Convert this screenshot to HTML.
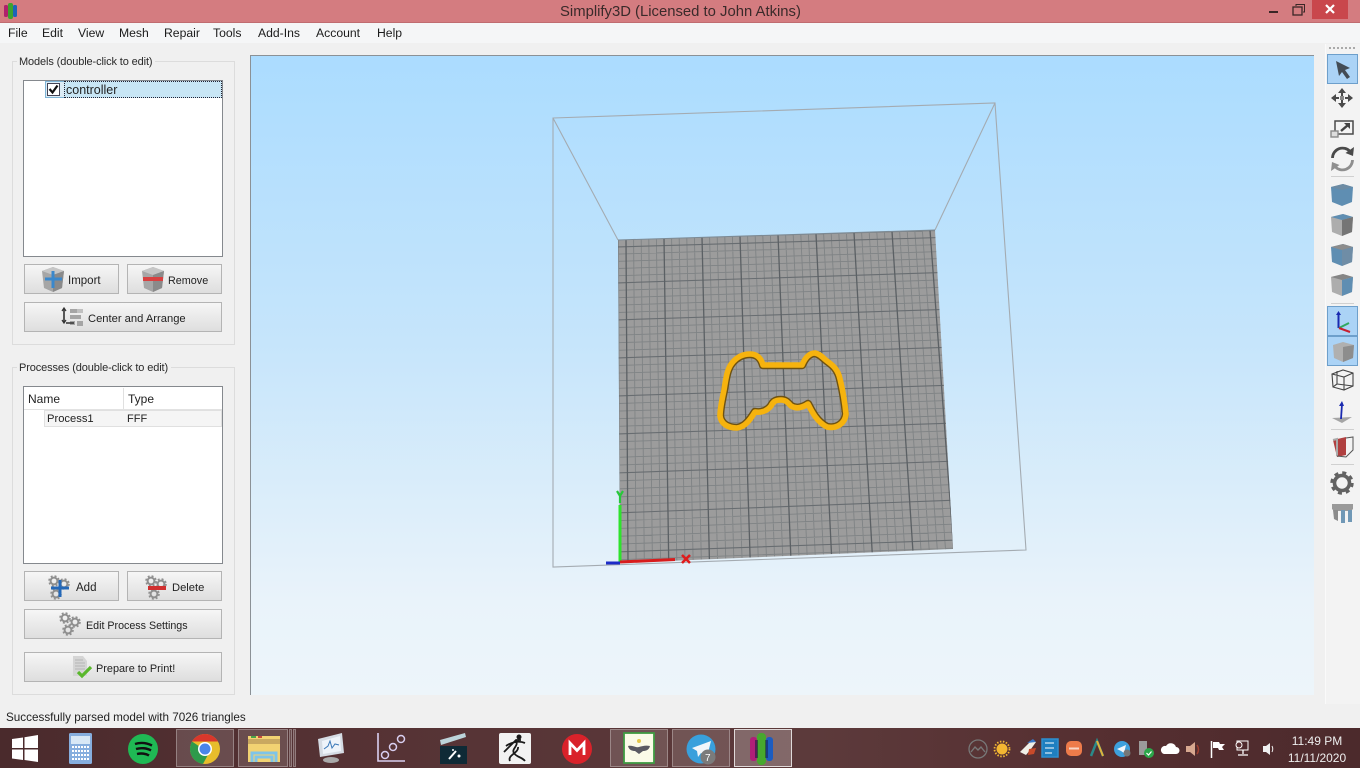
<!DOCTYPE html>
<html><head><meta charset="utf-8"><style>
html,body{margin:0;padding:0;width:1360px;height:768px;overflow:hidden;background:#f0f0f0}
body{position:relative;font-family:"Liberation Sans",sans-serif;font-size:12px;color:#222}
div{position:absolute;box-sizing:border-box}
.t{position:absolute;white-space:nowrap;line-height:16px}
.m{top:25px;font-size:12.2px;color:#1c1c1c}
.g{border:1px solid #dcdcdc;left:12px;width:223px}
.lab{background:#f0f0f0;padding:0 3px 0 2px;left:17px;font-size:11px;letter-spacing:-.12px;color:#2a2a2a}
.l{background:#fff;border:1px solid #85898e;left:23px;width:200px}
.b{border:1px solid #b4b4b4;background:linear-gradient(#f6f6f6,#dedede);height:30px}
svg{position:absolute;left:0;top:0}
</style></head><body>
<div style="left:0;top:0;width:1360px;height:23px;background:#d47c80;border-bottom:1px solid #c06c70"></div>
<div style="left:1312px;top:0;width:36px;height:19px;background:#c9474c"></div>
<span class="t" style="left:560px;top:4px;font-size:14.85px;color:#3a2a2a">Simplify3D (Licensed to John Atkins)</span>
<div style="left:0;top:23px;width:1360px;height:20px;background:#f5f6f7"></div>
<span class="t m" style="left:8px">File</span><span class="t m" style="left:42px">Edit</span><span class="t m" style="left:78px">View</span><span class="t m" style="left:119px">Mesh</span><span class="t m" style="left:164px">Repair</span><span class="t m" style="left:213px">Tools</span><span class="t m" style="left:258px">Add-Ins</span><span class="t m" style="left:316px">Account</span><span class="t m" style="left:377px">Help</span>

<div class="g" style="top:61px;height:284px"></div>
<span class="t lab" style="top:54px;left:17px">Models (double-click to edit)</span>
<div class="l" style="top:80px;height:177px"></div>
<div style="left:45px;top:81px;width:20px;height:17px;background:#dcecf6;border:1px solid #7fb4d6;border-right:none"></div>
<div style="left:64px;top:81px;width:158px;height:17px;background:#c8e6f5;border:1px dotted #223"></div>
<div style="left:47px;top:83px;width:13px;height:13px;background:#fff;border:1px solid #445"></div>
<span class="t" style="left:66px;top:82px;font-size:12.5px">controller</span>
<div class="b" style="left:24px;top:264px;width:95px"></div>
<div class="b" style="left:127px;top:264px;width:95px"></div>
<div class="b" style="left:24px;top:302px;width:198px"></div>
<span class="t" style="left:68px;top:273px;font-size:11.5px">Import</span>
<span class="t" style="left:168px;top:273px;font-size:10.8px">Remove</span>
<span class="t" style="left:88px;top:311px;font-size:11.2px">Center and Arrange</span>

<div class="g" style="top:367px;height:328px"></div>
<span class="t lab" style="top:360px;left:17px">Processes (double-click to edit)</span>
<div class="l" style="top:386px;height:178px"></div>
<div style="left:24px;top:387px;width:198px;height:23px;background:#fff;border-bottom:1px solid #e2e2e2"></div>
<div style="left:123px;top:388px;width:1px;height:21px;background:#e0e0e0"></div>
<span class="t" style="left:28px;top:391px">Name</span><span class="t" style="left:128px;top:391px">Type</span>
<div style="left:44px;top:410px;width:178px;height:17px;background:#f5f5f5;border:1px solid #e0e0e0"></div>
<span class="t" style="left:47px;top:411px;font-size:11.2px">Process1</span><span class="t" style="left:127px;top:411px;font-size:11px">FFF</span>
<div class="b" style="left:24px;top:571px;width:95px"></div>
<div class="b" style="left:127px;top:571px;width:95px"></div>
<div class="b" style="left:24px;top:609px;width:198px"></div>
<div class="b" style="left:24px;top:652px;width:198px"></div>
<span class="t" style="left:76px;top:580px;font-size:11.5px">Add</span>
<span class="t" style="left:172px;top:580px;font-size:11.2px">Delete</span>
<span class="t" style="left:86px;top:618px;font-size:10.7px">Edit Process Settings</span>
<span class="t" style="left:96px;top:661px;font-size:10.9px">Prepare to Print!</span>
<span class="t" style="left:6px;top:710px;font-size:11.7px">Successfully parsed model with 7026 triangles</span>

<!-- viewport -->
<div style="left:250px;top:55px;width:1064px;height:640px;background:linear-gradient(#abdcff,#c6e5fb 45%,#e9f3fa 85%,#edf5fa);border-left:1px solid #8b9196;border-top:1px solid #8b9196"></div>
<div style="left:1325px;top:44px;width:35px;height:660px;background:#f3f3f3;border-left:1px solid #fafafa"></div>

<!-- taskbar -->
<div style="left:0;top:728px;width:1360px;height:40px;background:
radial-gradient(ellipse 70px 30px at 1060px 735px,rgba(190,60,60,.5),transparent),
radial-gradient(ellipse 300px 40px at 560px 745px,rgba(150,110,110,.45),transparent),
linear-gradient(90deg,#4a2a2c,#553234 25%,#5c3a3b 60%,#562f31 80%,#4c2a2c)"></div>
<div style="left:176px;top:729px;width:58px;height:38px;background:rgba(255,255,255,.14);border:1px solid rgba(255,255,255,.3)"></div>
<div style="left:238px;top:729px;width:50px;height:38px;background:rgba(255,255,255,.14);border:1px solid rgba(255,255,255,.3)"></div>
<div style="left:289px;top:729px;width:3px;height:38px;background:rgba(255,255,255,.12);border:1px solid rgba(255,255,255,.28)"></div>
<div style="left:293px;top:729px;width:3px;height:38px;background:rgba(255,255,255,.12);border:1px solid rgba(255,255,255,.28)"></div>
<div style="left:610px;top:729px;width:58px;height:38px;background:rgba(255,255,255,.14);border:1px solid rgba(255,255,255,.3)"></div>
<div style="left:672px;top:729px;width:58px;height:38px;background:rgba(255,255,255,.14);border:1px solid rgba(255,255,255,.3)"></div>
<div style="left:734px;top:729px;width:58px;height:38px;background:rgba(255,255,255,.24);border:1px solid rgba(255,255,255,.75)"></div>

<svg width="1360" height="768" viewBox="0 0 1360 768" fill="none">
<defs>
<clipPath id="bed"><polygon points="618,240 935,230 953,549 620,563"/></clipPath>
<clipPath id="cc"><path d="M763,365 C761,358 757,354 750,354 C742,354 736,358 732,363 C727,369 726,378 724,390 C722,400 720,408 720,416 C721,424 728,428 737,428 C745,427 750,420 755,412 C761,413 767,411 771,406 C773,402 775,400 781,400 C786,400 788,403 791,406 C796,409 802,408 808,404 C812,412 817,422 827,427 C836,429 845,424 846,414 C845,404 843,391 840,379 C838,370 834,366 827,361 C822,357 820,354 815,353 C809,353 805,358 802,365 Z"/></clipPath>
<g id="gear"><circle r="3.4" stroke="#8f8f8f" stroke-width="2"/><circle r="5" stroke="#8f8f8f" stroke-width="1.6" stroke-dasharray="2 2"/></g>
<g id="cube"><polygon points="-11,-8 0,-12 11,-8 9,9 0,13 -9,9" fill="#a6a6a6"/><polygon points="-11,-8 0,-12 11,-8 0,-4" fill="#c6c6c6"/><polygon points="0,-4 11,-8 9,9 0,13" fill="#8a8a8a"/></g>
</defs>

<path d="M49.500,89l3,3.500 5,-7" stroke="#111" stroke-width="2.200"/>

<!-- title icons -->
<g><rect x="4" y="5" width="4" height="12" rx="1.5" fill="#b0206c"/><rect x="8" y="3" width="5" height="16" rx="2" fill="#3da32d"/><rect x="13" y="5" width="4" height="12" rx="1.5" fill="#1c64b8"/></g>
<rect x="1269" y="11" width="9" height="2" fill="#3a2626"/>
<rect x="1293" y="7" width="9" height="8" stroke="#3a2626" stroke-width="1.3"/><path d="M1296 6V4.5h8.5V12H1303" stroke="#3a2626" stroke-width="1"/>
<path d="M1326 5l8 8M1334 5l-8 8" stroke="#fff" stroke-width="2.2"/>

<!-- scene -->
<polygon points="618,240 935,230 953,549 620,563" fill="#9c9c9c"/>
<g clip-path="url(#bed)"><path id="minor" stroke="#767b7e" stroke-width=".9" opacity=".75"/><path id="majH" stroke="#686d71" stroke-width="1.1"/><path id="majV" stroke="#5b6064" stroke-width="1.3"/></g>
<path d="M553,118 L995,103 L1026,550 L553,567 Z M553,118 L618,240 M995,103 L935,230" stroke="#a4abb1" stroke-width="1.1"/>
<path d="M618,240 L935,230" stroke="#7d8b95" stroke-width="1"/>
<g clip-path="url(#cc)"><path d="M763,365 C761,358 757,354 750,354 C742,354 736,358 732,363 C727,369 726,378 724,390 C722,400 720,408 720,416 C721,424 728,428 737,428 C745,427 750,420 755,412 C761,413 767,411 771,406 C773,402 775,400 781,400 C786,400 788,403 791,406 C796,409 802,408 808,404 C812,412 817,422 827,427 C836,429 845,424 846,414 C845,404 843,391 840,379 C838,370 834,366 827,361 C822,357 820,354 815,353 C809,353 805,358 802,365 Z" stroke="#6e5212" stroke-width="8.4" stroke-linejoin="round"/></g>
<path d="M763,365 C761,358 757,354 750,354 C742,354 736,358 732,363 C727,369 726,378 724,390 C722,400 720,408 720,416 C721,424 728,428 737,428 C745,427 750,420 755,412 C761,413 767,411 771,406 C773,402 775,400 781,400 C786,400 788,403 791,406 C796,409 802,408 808,404 C812,412 817,422 827,427 C836,429 845,424 846,414 C845,404 843,391 840,379 C838,370 834,366 827,361 C822,357 820,354 815,353 C809,353 805,358 802,365 Z" stroke="#f6b30e" stroke-width="5.6" stroke-linejoin="round"/>
<path d="M620,562V505" stroke="#2ee32c" stroke-width="3"/>
<path d="M617,491l3,5 3,-5M620,496v7" stroke="#27c83a" stroke-width="2.2"/>
<path d="M620,562L675,559.5" stroke="#d81c1c" stroke-width="3"/>
<path d="M606,563H620" stroke="#1c2cc8" stroke-width="3"/>
<path d="M682,555l8,8M690,555l-8,8" stroke="#e01c1c" stroke-width="2.6"/>

<!-- left button icons -->
<use href="#cube" x="53" y="279"/><path d="M53,271V288" stroke="#3a88cc" stroke-width="3"/><path d="M45,279H62" stroke="#3a88cc" stroke-width="3"/>
<use href="#cube" x="153" y="279"/><rect x="143" y="277" width="20" height="4" fill="#d84040"/>
<g fill="#a5a5a5"><rect x="70" y="309" width="11" height="4"/><rect x="70" y="315" width="11" height="4"/><rect x="70" y="321" width="5" height="4"/><rect x="77" y="309" width="6" height="4" fill="#c0c0c0"/><rect x="77" y="321" width="6" height="5"/></g>
<path d="M64,309V322M66,323H74" stroke="#333" stroke-width="1.6"/>
<path d="M62,311l2,-3 2,3M62,320l2,3 2,-3" stroke="#333" stroke-width="1.2"/>

<use href="#gear" x="54" y="581"/><use href="#gear" x="64" y="584"/><use href="#gear" x="56" y="594"/>
<path d="M60,580V597M51,588H69" stroke="#2468b8" stroke-width="3"/>
<use href="#gear" x="151" y="581"/><use href="#gear" x="161" y="584"/><use href="#gear" x="154" y="594"/>
<rect x="148" y="586" width="18" height="4" fill="#d03030"/>
<use href="#gear" x="65" y="618"/><use href="#gear" x="75" y="622"/><use href="#gear" x="68" y="630"/>
<polygon points="73,656 83,656 87,661 87,676 73,676" fill="#d5d5d5"/><path d="M75,660h8M75,663h10M75,666h10M75,669h10" stroke="#b5b5b5"/>
<path d="M78,672l4,4 9,-9" stroke="#5ab82c" stroke-width="3.2"/>

<!-- right toolbar -->
<path d="M1329,48H1355" stroke="#aaa" stroke-width="2" stroke-dasharray="2 2"/>
<rect x="1327.5" y="54.5" width="30" height="29" fill="#abd3f6" stroke="#6d9fcb"/>
<polygon points="1336,61 1350,68 1345,70 1350,77 1347,79 1342,72 1339,76" fill="#444c55"/>
<g fill="#4a4a4a"><path d="M1342,88l4,5h-3v3h-2v-3h-3zM1342,108l4,-5h-3v-3h-2v3h-3zM1331,98l5,-4v3h3v2h-3v3zM1353,98l-5,-4v3h-3v2h3v3z"/><rect x="1340" y="96" width="4" height="4" fill="#888"/></g>
<rect x="1335" y="121" width="18" height="13" stroke="#4a4a4a" stroke-width="1.5"/><rect x="1331" y="131" width="7" height="6" fill="#ddd" stroke="#8a8a8a" stroke-width="1.4"/><path d="M1341,131l7,-6" stroke="#444" stroke-width="2.4"/><path d="M1344,123h6v6z" fill="#444"/>
<path d="M1332.500,158A10,10 0 0 1 1350,151.500" stroke="#4a4a4a" stroke-width="2.8"/><path d="M1354,147l-1,9 -7.500,-3z" fill="#4a4a4a"/><path d="M1352.500,160A10,10 0 0 1 1335,166.500" stroke="#8f8f8f" stroke-width="2.8"/><path d="M1331,171l1,-9 7.500,3z" fill="#8f8f8f"/>
<path d="M1331,176.5h23M1331,303.5h23M1331,429.5h23M1331,464.5h23" stroke="#d0d0d0"/>
<!-- cubes -->
<g><polygon points="1331,187 1343,184 1353,187 1352,202 1342,206 1332,202" fill="#5f8eb2"/><polygon points="1331,187 1343,184 1353,187 1342,190" fill="#6d8ba3"/></g>
<g><polygon points="1331,217 1343,214 1353,217 1352,232 1342,236 1332,232" fill="#adadad"/><polygon points="1331,217 1343,214 1353,217 1342,220" fill="#5f8eb2"/><polygon points="1342,220 1353,217 1352,232 1342,236" fill="#757575"/></g>
<g><polygon points="1331,247 1343,244 1353,247 1352,262 1342,266 1332,262" fill="#5f8eb2"/><polygon points="1331,247 1343,244 1353,247 1342,250" fill="#8c8c8c"/><polygon points="1342,250 1353,247 1352,262 1342,266" fill="#6f8da6"/></g>
<g><polygon points="1331,277 1343,274 1353,277 1352,292 1342,296 1332,292" fill="#adadad"/><polygon points="1331,277 1343,274 1353,277 1342,280" fill="#858585"/><polygon points="1342,280 1353,277 1352,292 1342,296" fill="#5f8eb2"/></g>
<rect x="1327.5" y="306.5" width="30" height="29" fill="#abd3f6" stroke="#6d9fcb"/>
<path d="M1338.500,328V313" stroke="#1a2ab0" stroke-width="2"/><path d="M1336,315l2.500,-4 2.500,4z" fill="#1a2ab0"/><path d="M1339,328l10,-5" stroke="#30a860" stroke-width="2"/><path d="M1339,328l11,4" stroke="#c81e30" stroke-width="2"/>
<rect x="1327.500" y="336.500" width="30" height="29" fill="#abd3f6" stroke="#6d9fcb"/>
<polygon points="1333,345 1343,342 1354,345 1353,358 1343,362 1334,358" fill="#b0b0b0"/><polygon points="1343,347 1354,345 1353,358 1343,362" fill="#8d8d8d"/>
<path d="M1332,374l11,-4 10,3v13l-9,4 -11,-3zM1332,374l12,3 9,-4M1344,377v13M1337,371v13l-4,3M1337,384l16,2" stroke="#444" stroke-width="1.1"/>
<polygon points="1332,418 1352,417 1342,423" fill="#a5a5a5"/><path d="M1341,419L1342,404" stroke="#1a2ab0" stroke-width="1.8"/><path d="M1339,406l3,-5 2,5z" fill="#1a2ab0"/>
<polygon points="1333,440 1346,437 1346,455 1337,457" fill="#b04040"/><path d="M1333,440l4,-1 0,17" stroke="#aaa" stroke-width="2"/><path d="M1346,438l7,-1v13l-7,7 -9,-1" stroke="#555"/>
<g stroke="#626262"><circle cx="1342" cy="483" r="7.500" stroke-width="3.600"/><circle cx="1342" cy="483" r="10.200" stroke-width="3" stroke-dasharray="4 4"/></g>
<path d="M1332,504h21v5l-2,2h-17l-2,-2z" fill="#9a9a9a"/><path d="M1333,510h5v11l-4,-2z" fill="#8b8b8b"/><path d="M1341,510h4v13h-4zM1348,510h4v12h-4z" fill="#7098b6"/>

<!-- taskbar icons -->
<g fill="#fff"><polygon points="12,739 23,737.500 23,748 12,748"/><polygon points="24.500,737.300 38,735 38,748 24.500,748"/><polygon points="12,749.500 23,749.500 23,760 12,758.500"/><polygon points="24.500,749.500 38,749.500 38,762 24.500,760"/></g>
<rect x="69" y="733" width="23" height="31" rx="1.500" fill="#86aede"/><rect x="71" y="736" width="19" height="8" fill="#d8e8f6"/><path d="M72,747h17M72,751h17M72,755h17M72,759h17" stroke="#fff" stroke-width="2" stroke-dasharray="2 1"/>
<circle cx="143" cy="749" r="15" fill="#1fb954"/><path d="M135,744c6,-2 12,-1 17,1.500M136,749c5,-1.500 11,-1 15,1.500M137,754c4,-1 9,-.5 12,1.500" stroke="#111" stroke-width="2.400"/>
<circle cx="205" cy="749" r="15" fill="#e7bd2c"/><path d="M192,741.500a15,15 0 0 1 26,0h-13z" fill="#d9372c"/><path d="M192,741.500a15,15 0 0 0 11,22.400l6,-11z" fill="#2e9a4b"/><circle cx="205" cy="749" r="7" fill="#fff"/><circle cx="205" cy="749" r="5.500" fill="#4a85ea"/>
<path d="M248,736h32v26h-32z" fill="#f2d272"/><path d="M248,739h32v5h-32z" fill="#c9a860"/><rect x="251" y="736" width="5" height="2" fill="#4aa44a"/><rect x="258" y="736" width="4" height="2" fill="#c84a3a"/><path d="M252,762v-9h24v9M256,762v-5h16v5" stroke="#7ec4e8" stroke-width="3"/>
<polygon points="318,739 342,733 344,753 320,757" fill="#d5dce4"/><polygon points="322,741 340,736 341,751 323,754" fill="#eef4fa"/><path d="M324,749l4,-3 2,-5 2,7 3,-4 4,1" stroke="#3a78b8"/><ellipse cx="331" cy="760" rx="8" ry="3" fill="#aaa"/>
<path d="M378,733V761H405" stroke="#d9cff0" stroke-width="1.600"/><circle cx="385" cy="755" r="3.500" stroke="#d9cff0" stroke-width="1.500"/><circle cx="393" cy="747" r="3.500" stroke="#d9cff0" stroke-width="1.500"/><circle cx="401" cy="739" r="3.500" stroke="#d9cff0" stroke-width="1.500"/>
<rect x="440" y="746" width="27" height="18" fill="#0f2a36"/><polygon points="440,740 465,733 466,737 441,745" fill="#bcd4da"/><path d="M449,759l7,-8" stroke="#fff" stroke-width="2"/><circle cx="459" cy="756" r="1.500" fill="#fff"/><circle cx="453" cy="750" r="1" fill="#fff"/>
<rect x="499" y="733" width="32" height="31" rx="2" fill="#f2f2f2"/><path d="M504,752c5,-5 9,-9 12,-12l5,0M516,741c3,5 -5,8 -2,12 2,4 8,4 11,8M510,761c-3,-6 9,-8 8,-14M506,746c4,-3 12,-6 19,-3" stroke="#1a1a1a" stroke-width="1.800"/><circle cx="519" cy="737" r="2.500" fill="#1a1a1a"/>
<circle cx="577" cy="749" r="15" fill="#d9222a"/><path d="M570,755v-12l7,7.500 7,-7.500v12" stroke="#fff" stroke-width="2.800"/>
<rect x="624" y="733" width="30" height="30" fill="#fbfbe8" stroke="#3f9a42" stroke-width="1.800"/><path d="M628,746c5,-1 8,2 11,1 3,-1 7,-2 11,-1 -1,4 -4,5 -7,5l-4,3 -4,-3c-3,0 -6,-1 -7,-5z" fill="#5a5a62"/><circle cx="639" cy="741" r="2" fill="#e5c84a"/>
<circle cx="701" cy="749" r="14.500" fill="#39a0dc"/><polygon points="692,748 711,741 707,757 701,753 698,757 697,751" fill="#f2f6fa"/><circle cx="708" cy="757" r="7.500" fill="#7b7b7b"/>
<rect x="750" y="737" width="7" height="24" rx="3" fill="#b01e78"/><rect x="757" y="733" width="9" height="32" rx="4" fill="#47a82e"/><rect x="766" y="737" width="7" height="24" rx="3" fill="#1c5cc0"/><rect x="755" y="740" width="3" height="18" fill="#1a1a40" opacity=".6"/><rect x="765" y="740" width="3" height="18" fill="#1a1a40" opacity=".5"/>
<!-- tray -->
<circle cx="978" cy="749" r="9" stroke="#777" stroke-width="1.300"/><path d="M971,752l4,-5 3,3 3,-3 4,5" stroke="#777" stroke-width="1.400"/>
<circle cx="1002" cy="749" r="5.500" fill="#f2b632"/><circle cx="1002" cy="749" r="7.500" stroke="#f2b632" stroke-width="1.800" stroke-dasharray="1.500 1.500"/>
<path d="M1020,752l8,-8 4,-4 4,2 -5,7 -5,6z" fill="#f0f0e8"/><path d="M1029,749l7,-1 -2,6 -6,1z" fill="#c84a2a"/><path d="M1027,743l6,-4 3,3z" fill="#3a78c8"/>
<rect x="1042" y="739" width="16" height="18" stroke="#2f8fd0" stroke-width="1.500" fill="#1f7fc0"/><path d="M1045,743h9M1045,748h9M1045,753h7" stroke="#fff"/>
<rect x="1066" y="741" width="16" height="15" rx="5" fill="#ee7b4a"/><rect x="1069" y="747.500" width="10" height="2" fill="#f9d6c6"/>
<path d="M1091,756l6,-15 6,15" stroke="#2a8a8a" stroke-width="2.500"/><path d="M1097,741l6,15" stroke="#e2b23a" stroke-width="2"/>
<circle cx="1122" cy="749" r="8" fill="#3ea0dc"/><polygon points="1117,749 1126,745 1124,753 1121,751" fill="#f2f6fa"/><circle cx="1127" cy="753" r="3.500" fill="#777"/>
<rect x="1139" y="741" width="8" height="14" fill="#9b9b9b"/><circle cx="1149" cy="753" r="5" fill="#2ca84a"/><path d="M1146.500,753l2,2 3,-3.500" stroke="#fff" stroke-width="1.200"/>
<path d="M1164,754h12a3.500,3.500 0 0 0 0,-7 5.500,5.500 0 0 0 -10,-1 4,4 0 0 0 -2,8z" fill="#fff"/>
<path d="M1186,746h4l5,-4v14l-5,-4h-4z" fill="#d8a890"/><path d="M1197,745c2,3 2,6 0,9" stroke="#a04030" stroke-width="1.500"/>
<path d="M1211.500,741v17" stroke="#fff" stroke-width="1.500"/><path d="M1213,742h6l1,2h5l-3,3 2,3h-5l-1,-2h-5z" fill="#fff"/>
<rect x="1237" y="741" width="11" height="9" stroke="#fff"/><circle cx="1239" cy="745" r="3" fill="#5a2f31" stroke="#fff"/><path d="M1243,750v4M1238,755h10" stroke="#fff" stroke-width="1.300"/>
<path d="M1263,746h3l4,-3v12l-4,-3h-3z" fill="#f0f0f0"/><path d="M1272,746c1,2 1,4 0,6" stroke="#f0f0f0"/>
</svg>

<span class="t" style="left:1286px;top:733px;font-size:12px;color:#eee;width:62px;text-align:center">11:49 PM</span>
<span class="t" style="left:1284px;top:750px;font-size:12px;color:#eee;width:66px;text-align:center">11/11/2020</span>
<span class="t" style="left:705px;top:751px;font-size:10px;color:#fff">7</span>

<script>
(function(){
var lt=[247,283,320,358,396,434,473,513,552],rt=[237,272,309,347,385,423,461,500,540];
var minD='',majV='',majH='',k,s;
for(k=-1;k<=8;k++){
 for(s=0;s<5;s++){
  var tx=626+38*(k+s/5),bx=628+40.7*(k+s/5);
  var d='M'+tx.toFixed(1)+','+(240-(tx-618)*10/317).toFixed(1)+'L'+bx.toFixed(1)+','+(563-(bx-620)*14/333).toFixed(1);
  if(s==0)majV+=d;else minD+=d;
 }
}
function at(a,x){if(x<0)return a[0]+(a[1]-a[0])*x;if(x>=8)return a[8]+(a[8]-a[7])*(x-8);var i=Math.floor(x);return a[i]+(a[i+1]-a[i])*(x-i)}
for(k=-1;k<=8;k++){
 for(s=0;s<5;s++){
  var v=k+s/5;
  var d2='M615,'+at(lt,v).toFixed(1)+'L958,'+at(rt,v).toFixed(1);
  if(s==0)majH+=d2;else minD+=d2;
 }
}
document.getElementById('minor').setAttribute('d',minD);
document.getElementById('majV').setAttribute('d',majV);
document.getElementById('majH').setAttribute('d',majH);
})();
</script>
</body></html>
